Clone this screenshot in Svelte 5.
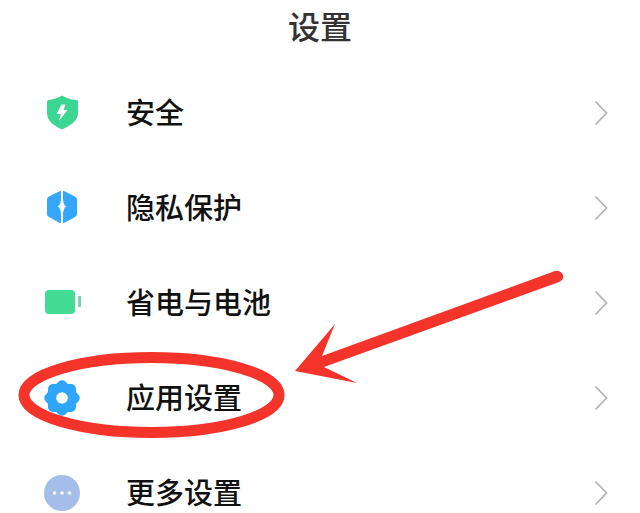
<script>
  const rows = [
    { label: '安全', icon: 'shield' },
    { label: '隐私保护', icon: 'hex' },
    { label: '省电与电池', icon: 'battery' },
    { label: '应用设置', icon: 'gear' },
    { label: '更多设置', icon: 'more' }
  ];
  const gearSquares = [0, 45];
</script>

<main class="page">
  <h1 class="title">设置</h1>
  <ul class="list">
    {#each rows as row}
      <li class="row">
        <svg class="icon" viewBox="0 0 36 36" aria-hidden="true">
          {#if row.icon === 'shield'}
            <path d="M18 0.500 C22 3 27 4.500 32 5 C33.500 5.200 34 5.800 34 7 V18 C34 26 26 31 18 34.500 C10 31 3 26 3 18 V7 C3 5.800 3.500 5.200 5 5 C9 4.500 14 3 18 0.500 Z" fill="#3bd692"/>
            <path d="M17.500 9.500 H21.500 L19.500 15 H23.500 L15 26 L16.800 19 H12.500 Z" fill="#fff"/>
          {:else if row.icon === 'hex'}
            <path d="M17 1 V8 C17 12.500 16 15.500 13.500 16.500 C16 17.500 17 20.500 17 25 V33 C16 33 15 32.600 14 32 L5 27 C3.500 26 3 25 3 24 V10 C3 8.500 3.500 7.400 5 6.500 L14 2 C15 1.400 16 1 17 1 Z" fill="#35a7fb"/>
            <path d="M19 1 V8 C19 12.500 20 15.500 22.500 16.500 C20 17.500 19 20.500 19 25 V33 C20 33 21 32.600 22 32 L31 27 C32.500 26 33 25 33 24 V10 C33 8.500 32.500 7.400 31 6.500 L22 2 C21 1.400 20 1 19 1 Z" fill="#35a7fb"/>
          {:else if row.icon === 'battery'}
            <rect x="1" y="5" width="30" height="24" rx="4" fill="#43dc95"/>
            <rect x="34" y="11" width="3" height="11" rx="0.500" fill="#7fd4ac"/>
          {:else if row.icon === 'gear'}
            {#each gearSquares as angle}
              <rect x="4" y="4" width="28" height="28" rx="5" fill="#2ea6fb" transform="rotate({angle} 18 18)"/>
            {/each}
            <circle cx="18" cy="18" r="5.800" fill="#fff"/>
          {:else}
            <circle cx="18" cy="18" r="18" fill="#a4bde9"/>
            <circle cx="10.500" cy="18" r="1.800" fill="#fff"/>
            <circle cx="18" cy="18" r="1.800" fill="#fff"/>
            <circle cx="25.500" cy="18" r="1.800" fill="#fff"/>
          {/if}
        </svg>
        <span class="label">{row.label}</span>
        <svg class="chevron" viewBox="0 0 14 26" aria-hidden="true">
          <path d="M1.500 1.500 L12.500 13 L1.500 24.500" fill="none" stroke="#b4b4b4" stroke-width="1.800"/>
        </svg>
      </li>
    {/each}
  </ul>

  <svg class="markup" viewBox="0 0 640 513" aria-hidden="true">
    <ellipse cx="151.500" cy="395" rx="127.500" ry="37.500" fill="none" stroke="#f4342b" stroke-width="11"/>
    <path d="M295 371 L335 324 L322 356 L555 271 C558 270 562 272 563 275 C564 278 562 281 559 282 L324 367 L357 383 Z" fill="#f4342b"/>
  </svg>
</main>

<style>
  :global(body) {
    margin: 0;
    background: #fff;
  }
  .page {
    position: relative;
    width: 640px;
    height: 513px;
    overflow: hidden;
    background: #fff;
    font-family: "Noto Sans CJK SC", "Noto Sans", sans-serif;
    color: #111;
  }
  .title {
    margin: 0;
    height: 65px;
    padding-top: 1px;
    box-sizing: border-box;
    text-align: center;
    font-size: 32px;
    line-height: 48px;
    font-weight: 500;
    color: #333;
  }
  .list {
    margin: 0;
    padding: 0;
    list-style: none;
  }
  .row {
    display: flex;
    align-items: center;
    height: 95px;
    padding: 0 32px 0 44px;
  }
  .icon {
    width: 36px;
    height: 36px;
    flex: none;
    overflow: visible;
  }
  .label {
    flex: 1;
    margin: 0 0 3px 46px;
    font-size: 29px;
    line-height: 40px;
    font-weight: 500;
  }
  .chevron {
    width: 14px;
    height: 26px;
    flex: none;
  }
  .markup {
    position: absolute;
    inset: 0;
    width: 640px;
    height: 513px;
  }
</style>
